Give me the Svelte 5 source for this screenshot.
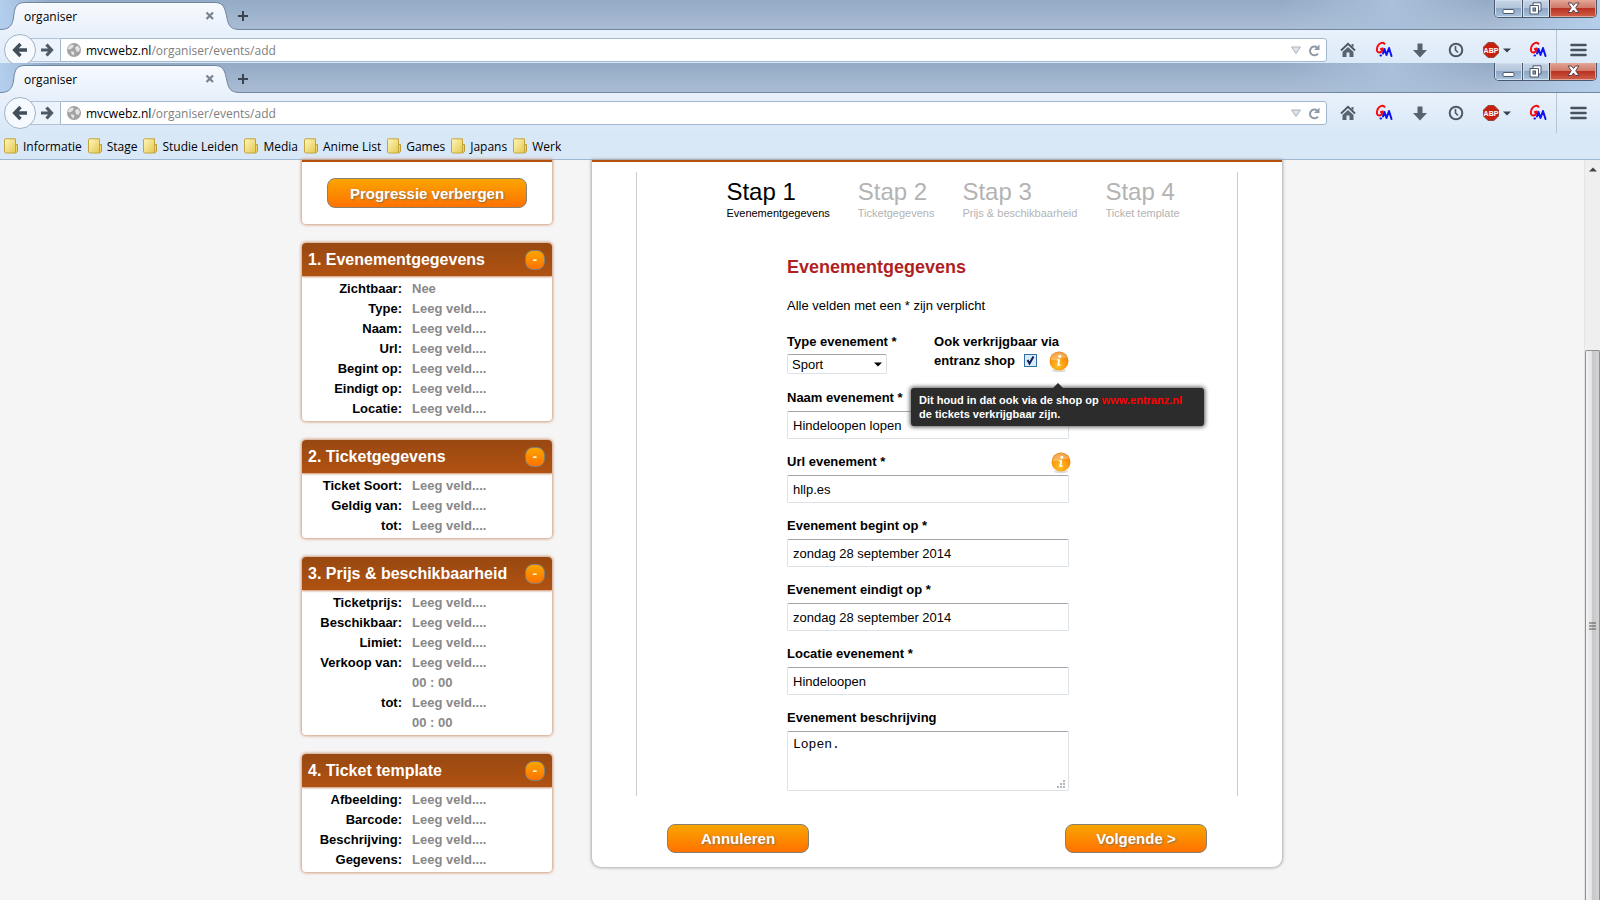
<script>
  const bookmarks = ['Informatie', 'Stage', 'Studie Leiden', 'Media', 'Anime List', 'Games', 'Japans', 'Werk'];

  const empty = 'Leeg veld....';
  const panels = [
    {
      title: '1. Evenementgegevens',
      rows: [
        ['Zichtbaar:', 'Nee'],
        ['Type:', empty],
        ['Naam:', empty],
        ['Url:', empty],
        ['Begint op:', empty],
        ['Eindigt op:', empty],
        ['Locatie:', empty]
      ]
    },
    {
      title: '2. Ticketgegevens',
      rows: [
        ['Ticket Soort:', empty],
        ['Geldig van:', empty],
        ['tot:', empty]
      ]
    },
    {
      title: '3. Prijs & beschikbaarheid',
      rows: [
        ['Ticketprijs:', empty],
        ['Beschikbaar:', empty],
        ['Limiet:', empty],
        ['Verkoop van:', empty],
        ['', '00 : 00'],
        ['tot:', empty],
        ['', '00 : 00']
      ]
    },
    {
      title: '4. Ticket template',
      rows: [
        ['Afbeelding:', empty],
        ['Barcode:', empty],
        ['Beschrijving:', empty],
        ['Gegevens:', empty]
      ]
    }
  ];

  const steps = [
    ['Stap 1', 'Evenementgegevens'],
    ['Stap 2', 'Ticketgegevens'],
    ['Stap 3', 'Prijs & beschikbaarheid'],
    ['Stap 4', 'Ticket template']
  ];

  let form = $state({
    type: 'Sport',
    shop: true,
    name: 'Hindeloopen lopen',
    url: 'hllp.es',
    begin: 'zondag 28 september 2014',
    end: 'zondag 28 september 2014',
    location: 'Hindeloopen',
    description: 'Lopen.'
  });
</script>

{#snippet monkey()}
  <svg width="18" height="18" viewBox="0 0 18 18" fill="none" stroke-linecap="round" stroke-linejoin="round">
    <path d="M9.500 2.800C7.500 .8 4 2 2.500 5.500C1.200 9 2 11.500 4 11.500C6 11.500 7.500 9.500 7.800 7.500L5.800 8" stroke="#f40c14" stroke-width="2" />
    <path d="M5.500 14.500H6M8 12.500L9.500 8L11.500 14L14 7L16.500 15" stroke="#1010f0" stroke-width="2" />
  </svg>
{/snippet}

{#snippet info()}
  <svg width="20" height="22" viewBox="0 0 20 22">
    <defs>
      <radialGradient id="ball" cx="45%" cy="75%" r="75%">
        <stop offset="0" stop-color="#ffc02a" />
        <stop offset=".55" stop-color="#fb9a0c" />
        <stop offset="1" stop-color="#e87a06" />
      </radialGradient>
    </defs>
    <ellipse cx="10" cy="19.500" rx="7" ry="1.800" fill="#ddd" />
    <circle cx="10" cy="10" r="9.500" fill="url(#ball)" />
    <path d="M1.500 9A8.500 8.500 0 0 1 18 7C13 5.500 7 10.500 1.500 9Z" fill="#fff" opacity=".3" />
    <circle cx="10.800" cy="5.200" r="1.500" fill="#fff" />
    <path d="M7.800 8.300H11.300L10.300 13.600H11.800L11.500 14.800H8.200L9.200 9.500H7.600Z" fill="#fff" />
  </svg>
{/snippet}

{#snippet browser(full)}
  <header class="browser" class:cut={!full}>
    <div class="tabstrip">
      <div class="tab">
        <svg class="tabshape" viewBox="0 0 242 31" width="242" height="31">
          <defs>
            <linearGradient id="tabfill" x1="0" y1="0" x2="0" y2="1">
              <stop offset="0" stop-color="#f7fafe" />
              <stop offset="1" stop-color="#e9f1fb" />
            </linearGradient>
          </defs>
          <path d="M0 31V29.500C9 29.500 12 26 13.500 18C14.500 9 15 2.500 25 2.500H215C224 2.500 225 9 227 18C228.500 26 231 29.500 240 29.500H242V31Z" fill="url(#tabfill)" />
          <path d="M0 29.500C9 29.500 12 26 13.500 18C14.500 9 15 2.500 25 2.500H215C224 2.500 225 9 227 18C228.500 26 231 29.500 240 29.500H242" fill="none" stroke="#6f879f" />
        </svg>
        <span>organiser</span>
        <button class="plain" aria-label="Tabblad sluiten">
          <svg width="10" height="10" viewBox="0 0 10 10"><path d="M1.500 1.500L8 8M8 1.500L1.500 8" stroke="#77828e" stroke-width="2.200" /></svg>
        </button>
      </div>
      <button class="plain newtab" aria-label="Nieuw tabblad">
        <svg width="12" height="12" viewBox="0 0 12 12"><path d="M6 1V11M1 6H11" stroke="#39444f" stroke-width="2" /></svg>
      </button>
      <div class="winbuttons">
        <button class="min" aria-label="Minimaliseren">
          <svg width="13" height="14" viewBox="0 0 13 14"><rect x="1" y="7.500" width="11" height="4" rx="1" fill="#fff" stroke="#4c586a" /></svg>
        </button>
        <button class="max" aria-label="Verkleinen">
          <svg width="13" height="14" viewBox="0 0 13 14"><path d="M4 .8H12V9H9.500V12H1V3.500H4Z" fill="#fff" stroke="#4c586a" /><path d="M3.500 3.500H9.500V9" fill="none" stroke="#4c586a" /><rect x="4" y="6" width="2.500" height="3" fill="#8ba3c2" stroke="#4c586a" /></svg>
        </button>
        <button class="close" aria-label="Sluiten">
          <svg width="13" height="14" viewBox="0 0 13 14"><path d="M1 1H4.500L6.500 3.500L8.500 1H12L8.700 5.800L12 10.500H8.500L6.500 8L4.500 10.500H1L4.300 5.800Z" fill="#fff" stroke="#5d4048" /></svg>
        </button>
      </div>
    </div>

    <div class="toolbar">
      <button class="plain back" aria-label="Terug">
        <svg width="16" height="16" viewBox="0 0 16 16"><path d="M8.500 2L2.700 8L8.500 14M3 8H15" fill="none" stroke="#414d59" stroke-width="3.400" /></svg>
      </button>
      <button class="plain forward" aria-label="Vooruit">
        <svg width="14" height="14" viewBox="0 0 14 14"><path d="M6.500 1.500L11.500 7L6.500 12.500M11.500 7H1" fill="none" stroke="#4f5c68" stroke-width="3.200" /></svg>
      </button>
      <div class="urlbar">
        <svg width="14" height="14" viewBox="0 0 14 14"><circle cx="7" cy="7" r="7" fill="#a2a2a2" /><path d="M2 3L5 1.500L7 2.500L5.500 5L3 6.500L1 6ZM8 4.500L11 2.500L13 6L11.500 9L9 8ZM4 8L7.500 9L6.500 12.500L4.500 11Z" fill="#e4e4e4" /></svg>
        <span class="address"><b>mvcwebz.nl</b>/organiser/events/add</span>
        <svg width="10" height="8" viewBox="0 0 10 8"><path d="M.5 1H9.500L5 7.500Z" fill="#dde2e8" stroke="#a9b3be" /></svg>
        <button class="plain" aria-label="Vernieuwen">
          <svg width="12" height="13" viewBox="0 0 12 13"><path d="M9 3.400A4.400 4.400 0 1 0 10 9.500" fill="none" stroke="#8e99a5" stroke-width="2" /><path d="M11.500 .5V6H6Z" fill="#8e99a5" /></svg>
        </button>
      </div>
      <div class="tools">
        <button class="plain" aria-label="Startpagina">
          <svg width="16" height="16" viewBox="0 0 16 16"><path d="M1 8.500L8 1.800L15 8.500" fill="none" stroke="#4b5560" stroke-width="1.800" /><path d="M11.500 2H13.500V5.500L11.500 3.800ZM8 5L13.500 10V15H9.500V10.500H6.500V15H2.500V10Z" fill="#5a646f" /></svg>
        </button>
        <button class="plain" aria-label="Greasemonkey">{@render monkey()}</button>
        <button class="plain" aria-label="Downloads">
          <svg width="14" height="15" viewBox="0 0 14 15"><path d="M4.500 .5H9.500V7H14L7 14.500L0 7H4.500Z" fill="#57626d" /></svg>
        </button>
        <button class="plain" aria-label="Geschiedenis">
          <svg width="16" height="16" viewBox="0 0 16 16" fill="none" stroke="#4e5964"><circle cx="8" cy="8" r="6.300" stroke-width="2" /><path d="M7.500 4V8L10 10.500" stroke-width="1.600" /></svg>
        </button>
        <button class="plain abp" aria-label="Adblock Plus">
          <svg width="16" height="16" viewBox="0 0 16 16"><path d="M5 .5H11L15.500 5V11L11 15.500H5L.5 11V5Z" fill="#c8200f" stroke="#8f4a40" /><text x="8" y="10.700" text-anchor="middle" fill="#fff">ABP</text></svg>
          <svg width="8" height="5" viewBox="0 0 8 5"><path d="M0 .5H8L4 4.500Z" fill="#39434d" /></svg>
        </button>
        <button class="plain" aria-label="Gebruikersscripts">{@render monkey()}</button>
        <button class="plain menu" aria-label="Menu">
          <svg width="17" height="14" viewBox="0 0 17 14"><path d="M1.500 2H15.500M1.500 7H15.500M1.500 12H15.500" stroke="#48525d" stroke-width="2.600" stroke-linecap="round" /></svg>
        </button>
      </div>
    </div>

    {#if full}
      <nav class="bookmarks">
        {#each bookmarks as name}
          <a href="#{name}">
            <svg width="14" height="16" viewBox="0 0 14 16">
              <defs>
                <linearGradient id="folder" x1="0" y1="0" x2="1" y2="1">
                  <stop offset="0" stop-color="#fff6bd" />
                  <stop offset="1" stop-color="#e5c84f" />
                </linearGradient>
              </defs>
              <path d="M11.500 6.500H13.500V13.500L11.500 15Z" fill="#f0d56a" stroke="#b99c35" />
              <path d="M1 .8H11.500V15H1.500L.5 14V1.300Z" fill="url(#folder)" stroke="#c3a640" />
            </svg>
            <span>{name}</span>
          </a>
        {/each}
      </nav>
    {/if}
  </header>
{/snippet}

{#snippet field(id, label, key)}
  <div class="field">
    <label for={id}>{label}</label>
    <input {id} type="text" bind:value={form[key]} />
  </div>
{/snippet}

<div class="screen">
  {@render browser(false)}
  {@render browser(true)}

  <div class="viewport">
    <div class="page">
      <aside>
        <section class="panel first">
          <button class="orange">Progressie verbergen</button>
        </section>
        {#each panels as panel}
          <section class="panel">
            <h2>{panel.title}<button class="orange fold" aria-label="Inklappen">-</button></h2>
            <dl>
              {#each panel.rows as [term, value]}
                <dt>{term}</dt>
                <dd>{value}</dd>
              {/each}
            </dl>
          </section>
        {/each}
      </aside>

      <main>
        <div class="inner">
          <ol>
            {#each steps as [step, caption], i}
              <li class:active={i === 0}><strong>{step}</strong><span>{caption}</span></li>
            {/each}
          </ol>
          <form>
            <h1>Evenementgegevens</h1>
            <p>Alle velden met een * zijn verplicht</p>
            <div class="top">
              <div class="type">
                <label for="type">Type evenement *</label>
                <div class="select">
                  <select id="type" bind:value={form.type}><option>Sport</option></select>
                  <svg width="8" height="5" viewBox="0 0 8 5"><path d="M0 .5H8L4 4.500Z" fill="#000" /></svg>
                </div>
              </div>
              <div class="shop">
                <label for="shop">Ook verkrijgbaar via</label>
                <div class="shopline">
                  <label for="shop">entranz shop</label>
                  <input id="shop" type="checkbox" bind:checked={form.shop} />
                  <span class="tipanchor">
                    {@render info()}
                    <span class="tooltip" role="tooltip">Dit houd in dat ook via de shop op <em>www.entranz.nl</em><br />de tickets verkrijgbaar zijn.</span>
                  </span>
                </div>
              </div>
            </div>
            {@render field('name', 'Naam evenement *', 'name')}
            <div class="field">
              <div class="labelrow"><label for="url">Url evenement *</label>{@render info()}</div>
              <input id="url" type="text" bind:value={form.url} />
            </div>
            {@render field('begin', 'Evenement begint op *', 'begin')}
            {@render field('end', 'Evenement eindigt op *', 'end')}
            {@render field('location', 'Locatie evenement *', 'location')}
            <div class="field">
              <label for="description">Evenement beschrijving</label>
              <div class="area">
                <textarea id="description" bind:value={form.description}></textarea>
                <svg width="9" height="9" viewBox="0 0 9 9" fill="#b5b5b5"><path d="M6 0h2v2h-2zM3 3h2v2h-2zM6 3h2v2h-2zM0 6h2v2h-2zM3 6h2v2h-2zM6 6h2v2h-2z" /></svg>
              </div>
            </div>
          </form>
        </div>
        <div class="actions">
          <button class="orange">Annuleren</button>
          <button class="orange">Volgende &gt;</button>
        </div>
      </main>
    </div>

    <div class="scrollbar">
      <svg width="8" height="5" viewBox="0 0 8 5"><path d="M0 4.500H8L4 .5Z" fill="#444" /></svg>
      <div class="thumb">
        <svg width="8" height="8" viewBox="0 0 8 8"><path d="M0 1H7M0 4H7M0 7H7" stroke="#555" /></svg>
      </div>
    </div>
  </div>
</div>

<style>
  :global(body) {
    margin: 0;
    background: #f5f5f5;
  }
  .screen {
    display: flex;
    flex-direction: column;
    min-height: 100vh;
    font-family: 'Liberation Sans', Arial, sans-serif;
    font-size: 13px;
    color: #000;
  }
  .screen *,
  .screen {
    box-sizing: border-box;
  }
  svg {
    display: block;
    flex: none;
  }
  button {
    font-family: inherit;
    padding: 0;
  }
  .plain {
    display: flex;
    align-items: center;
    justify-content: center;
    background: none;
    border: 0;
  }

  /* browser chrome */
  .browser {
    height: 97px;
    flex: none;
    display: flex;
    flex-direction: column;
    overflow: hidden;
    font-family: 'Open Sans', 'Segoe UI', sans-serif;
    font-size: 12px;
    background: linear-gradient(#e9f1fb 30px, #d9e8f7 70px);
    border-bottom: 1px solid #9fb8d2;
  }
  .browser.cut {
    height: 63px;
    border-bottom: 0;
  }
  .tabstrip {
    display: flex;
    height: 30px;
    flex: none;
    background:
      linear-gradient(#6f879f, #6f879f) bottom / 100% 1px no-repeat,
      linear-gradient(90deg, #b3cfee 0, transparent 50px),
      linear-gradient(90deg, transparent 80%, #a9c0da 87%, transparent 93%, #b4cfec 100%),
      linear-gradient(#93abc6, #abbdd4);
  }
  .tab {
    position: relative;
    display: flex;
    align-items: center;
    justify-content: space-between;
    width: 242px;
    padding: 2px 27px 0 24px;
  }
  .tabshape {
    position: absolute;
    left: 0;
    top: 0;
  }
  .tab span,
  .tab button {
    position: relative;
  }
  .newtab {
    padding-top: 2px;
    margin-left: -5px;
  }
  .winbuttons {
    display: flex;
    width: 103px;
    height: 18px;
    margin: 0 3px 0 auto;
    border: 1px solid #4a596d;
    border-top: 0;
    border-radius: 0 0 5px 5px;
    overflow: hidden;
  }
  .winbuttons button {
    display: flex;
    align-items: center;
    justify-content: center;
    border: 0;
    background: linear-gradient(#c6d5e6, #b4c6dc 45%, #8ea7c5 50%, #a9c2dd);
    box-shadow: inset 0 0 0 1px #d0deed;
  }
  .winbuttons .min {
    width: 27px;
  }
  .winbuttons .max {
    width: 27px;
    padding-right: 2px;
    border-left: 1px solid #4a596d;
  }
  .winbuttons .close {
    flex: 1;
    border-left: 1px solid #501a1a;
    background: linear-gradient(#e2a596, #d17a6a 45%, #b83321 50%, #d0604a);
    box-shadow: inset 0 0 0 1px #e6a495;
  }
  .toolbar {
    display: flex;
    align-items: center;
    height: 40px;
    flex: none;
  }
  .back {
    width: 32px;
    height: 32px;
    margin-left: 4px;
    border: 1px solid #9fb2c7;
    border-radius: 50%;
    background: #f6f9fd;
    flex: none;
    z-index: 1;
  }
  .forward {
    width: 30px;
    height: 24px;
    margin-left: -6px;
    border: 1px solid #b0c3d8;
    border-width: 1px 0;
    background: #edf3fb;
    padding-left: 3px;
    flex: none;
  }
  .urlbar {
    display: flex;
    align-items: center;
    gap: 5px;
    flex: 1;
    height: 24px;
    padding: 0 6px;
    border: 1px solid #a3b8cf;
    border-radius: 0 3px 3px 0;
    background: #fff;
  }
  .urlbar button {
    margin-left: 2px;
  }
  .address {
    flex: 1;
    color: #808080;
  }
  .address b {
    font-weight: 400;
    color: #000;
  }
  .tools {
    display: flex;
    height: 100%;
    margin-left: 3px;
  }
  .tools .plain {
    width: 36px;
  }
  .tools .abp {
    width: 46px;
    gap: 4px;
  }
  .abp text {
    font: bold 7px 'Liberation Sans', sans-serif;
  }
  .tools .menu {
    width: 44px;
    border-left: 1px solid #b5c5d7;
  }
  .bookmarks {
    display: flex;
    gap: 6px;
    padding: 5px 4px 0;
  }
  .bookmarks a {
    display: flex;
    align-items: flex-start;
    gap: 5px;
    line-height: 18px;
    color: #000;
    text-decoration: none;
  }

  /* page */
  .viewport {
    flex: 1;
    display: flex;
    background: #f5f5f5;
  }
  .page {
    flex: 1;
    display: flex;
    justify-content: center;
    align-items: flex-start;
    gap: 40px;
    padding-bottom: 28px;
  }
  aside {
    display: flex;
    flex-direction: column;
    gap: 19px;
    width: 250px;
  }
  .panel {
    border-radius: 4px;
    background: #fff;
    box-shadow: 0 0 3px 1px #cf9c7d;
    overflow: hidden;
  }
  .panel.first {
    height: 64px;
    padding: 16px 25px;
    border-top: 2px solid #b1530f;
    border-radius: 0 0 4px 4px;
  }
  .orange {
    height: 30px;
    border: 1px solid #85806f;
    border-radius: 8px;
    background: linear-gradient(#faa500, #ff7200);
    color: #fff;
    font-size: 15px;
    font-weight: bold;
    text-shadow: 1px 1px 2px #8a6d46;
  }
  .first .orange {
    width: 100%;
  }
  h2 {
    display: flex;
    align-items: center;
    justify-content: space-between;
    height: 33px;
    margin: 0;
    padding: 1px 7px 0 6px;
    background: linear-gradient(#984811, #b05212);
    box-shadow: 0 1px 2px #c98b68;
    color: #fff;
    font-size: 16px;
  }
  .fold {
    width: 20px;
    height: 20px;
    font-size: 13px;
    line-height: 16px;
    text-shadow: none;
  }
  dl {
    display: grid;
    grid-template-columns: 100px 1fr;
    column-gap: 10px;
    grid-auto-rows: 20px;
    margin: 0;
    padding: 3px 0 2px;
    font-weight: bold;
    line-height: 20px;
  }
  dt {
    text-align: right;
  }
  dd {
    margin: 0;
    color: #888;
  }

  main {
    width: 690px;
    padding: 10px 44px 14px;
    border-top: 2px solid #b1530f;
    border-radius: 0 0 9px 9px;
    background: #fff;
    box-shadow: 0 0 3px 1px #aaa;
  }
  .inner {
    border: 1px solid #ccc;
    border-width: 0 1px;
    padding-bottom: 5px;
  }
  ol {
    display: flex;
    justify-content: center;
    gap: 28px;
    margin: 0;
    padding: 6px 0 0 32px;
    list-style: none;
    color: #b3b3b3;
  }
  li {
    display: flex;
    flex-direction: column;
  }
  li.active {
    color: #000;
  }
  li strong {
    font-size: 24px;
    line-height: 28px;
    font-weight: 400;
  }
  li span {
    font-size: 11px;
    line-height: 14px;
  }
  form {
    width: 282px;
    margin: 36px auto 0 150px;
  }
  h1 {
    margin: 0;
    font-size: 18px;
    line-height: 22px;
    color: #b01f24;
  }
  p {
    margin: 18px 0 16px;
    line-height: 20px;
  }
  label {
    font-weight: bold;
    line-height: 20px;
    white-space: nowrap;
  }
  .top {
    display: flex;
    height: 56px;
  }
  .type {
    width: 149px;
  }
  .type label {
    display: block;
  }
  .select {
    position: relative;
    width: 100px;
    margin-top: 2px;
  }
  .select svg {
    position: absolute;
    right: 5px;
    top: 8px;
    pointer-events: none;
  }
  select,
  .field input,
  textarea {
    display: block;
    width: 100%;
    margin: 0;
    border: 1px solid #dde1e8;
    border-top-color: #a4a5ac;
    border-radius: 2px;
    background: #fff;
    color: #000;
    font-family: inherit;
    font-size: 13px;
  }
  select {
    appearance: none;
    height: 20px;
    padding: 0 4px;
  }
  .shopline {
    display: flex;
    align-items: flex-start;
    height: 18px;
  }
  .shopline input {
    appearance: none;
    width: 13px;
    height: 13px;
    margin: 2px 12px 0 9px;
    border: 1px solid #31709f;
    background: #d9eafa;
  }
  .shopline input:checked {
    background: #d9eafa
      url("data:image/svg+xml,%3Csvg xmlns='http://www.w3.org/2000/svg' viewBox='0 0 11 11'%3E%3Cpath d='M2.500 5L4.500 8.500L8.500 1.500' fill='none' stroke='%23101a5c' stroke-width='2'/%3E%3C/svg%3E");
  }
  .shopline label {
    line-height: 18px;
  }
  .tipanchor {
    position: relative;
    margin-top: -1px;
  }
  .tooltip {
    position: absolute;
    z-index: 2;
    top: 37px;
    left: -138px;
    min-width: 293px;
    padding: 5px 8px;
    border-radius: 3px;
    background: #2c2c2c;
    box-shadow: 0 0 4px 1px #555;
    color: #fff;
    font-size: 11px;
    font-weight: bold;
    line-height: 14px;
    white-space: nowrap;
  }
  .tooltip::before {
    content: '';
    position: absolute;
    top: -5px;
    left: 142px;
    border: 5px solid transparent;
    border-top: 0;
    border-bottom-color: #2c2c2c;
  }
  .tooltip em {
    font-style: normal;
    color: #f00;
  }
  .field {
    margin-bottom: 13px;
  }
  .field:last-child {
    margin-bottom: 0;
  }
  .field label {
    display: block;
    margin-bottom: 3px;
  }
  .labelrow {
    display: flex;
    justify-content: space-between;
    height: 23px;
    margin-right: -2px;
  }
  .field input {
    height: 28px;
    padding: 0 5px;
  }
  .area {
    position: relative;
  }
  textarea {
    height: 60px;
    padding: 5px;
    resize: none;
    font-family: 'Liberation Mono', monospace;
  }
  .area svg {
    position: absolute;
    right: 3px;
    bottom: 2px;
  }
  .actions {
    display: flex;
    justify-content: space-between;
    padding: 28px 31px 0;
  }
  .actions .orange {
    width: 142px;
    height: 29px;
  }

  .scrollbar {
    display: flex;
    flex-direction: column;
    align-items: center;
    width: 16px;
    padding-top: 7px;
    background: #efefef;
    border-left: 1px solid #e4e4e4;
  }
  .thumb {
    display: flex;
    align-items: center;
    justify-content: center;
    flex: 1;
    width: 15px;
    margin-top: 178px;
    border: 1px solid #8f8f8f;
    border-bottom: 0;
    border-radius: 2px 2px 0 0;
    background: linear-gradient(90deg, #f3f3f3, #e2e2e4 45%, #c9c9cc 50%, #d3d3d6);
  }
</style>
